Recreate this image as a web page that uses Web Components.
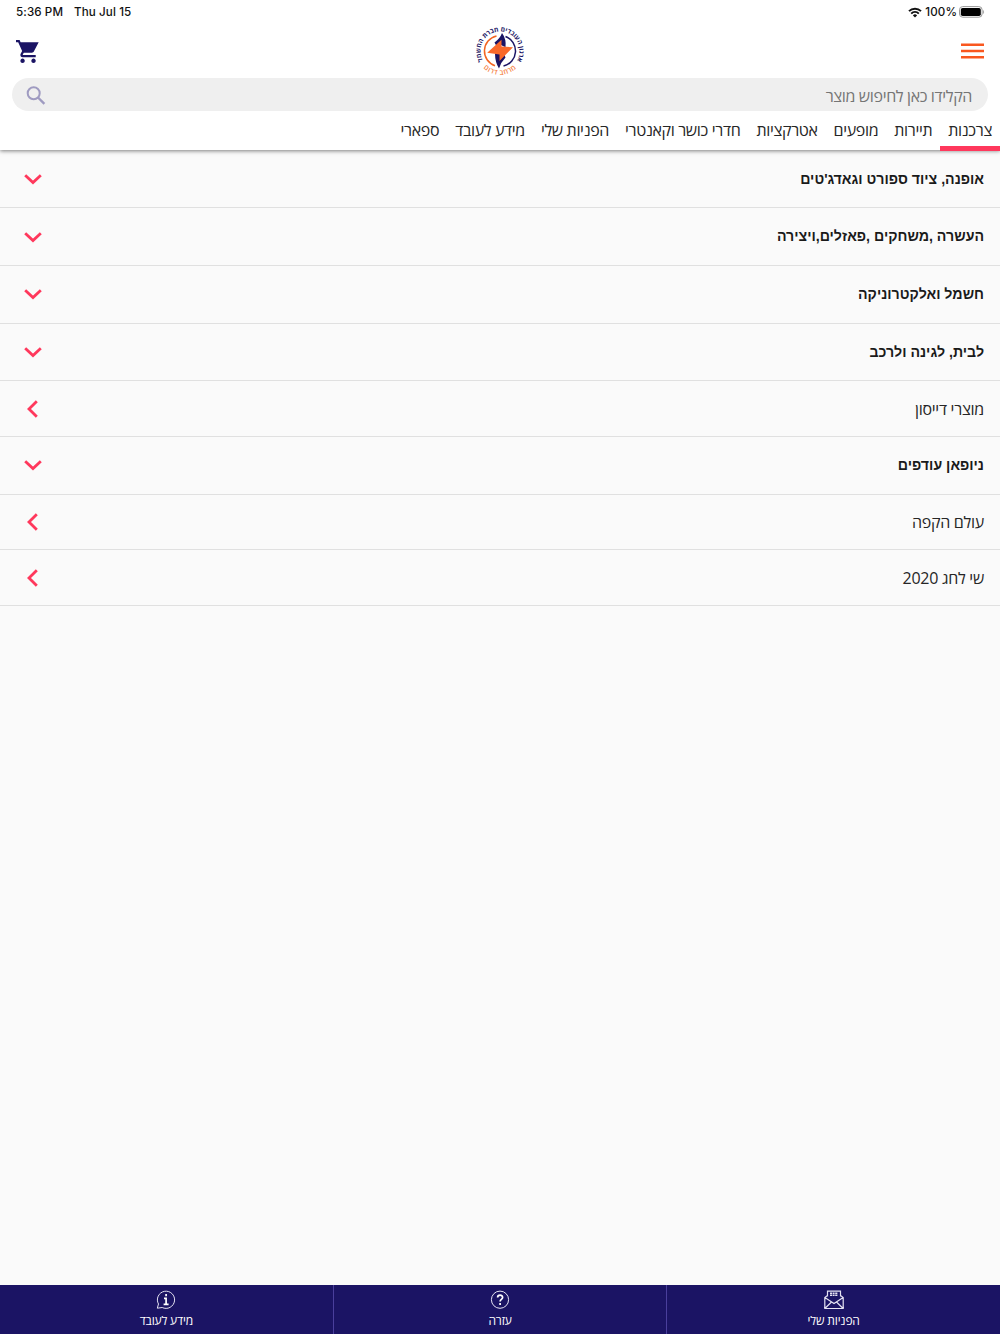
<!DOCTYPE html>
<html lang="he" dir="rtl">
<head>
<meta charset="utf-8">
<meta name="viewport" content="width=device-width">
<title>צרכנות</title>
<style>
html, body{
    margin: 0;
    height: 100%;
}
body{
    background: #fafafa;
    font-family: "Open Sans", "Noto Sans", "DejaVu Sans", sans-serif;
    color: #262626;
    overflow: hidden;
}
</style>
</head>
<body>
<shop-app></shop-app>

<script>
class BaseElement extends HTMLElement{
    constructor(){
        super();
        this.attachShadow({mode:'open'});
        this.shadowRoot.innerHTML = this.render();
    }
}

// Device status bar
class StatusBar extends BaseElement{
    render(){
        return `
        <style>
        :host{
            display: flex;
            direction: ltr;
            justify-content: space-between;
            height: 24px;
            padding: 0 15px 0 16px;
            box-sizing: border-box;
            align-items: center;
            font: 500 11.6px/24px Inter, "Liberation Sans", sans-serif;
            letter-spacing: 0.1px;
            color: #111;
        }
        div{
            display: flex;
            align-items: center;
        }
        .left{ gap: 11px; }
        .wifi{ margin-right: 3px; }
        .battery{ margin-left: 2px; }
        </style>
        <div class="left"><span>5:36 PM</span><span>Thu Jul 15</span></div>
        <div>
            <svg class="wifi" width="14" height="11" viewBox="0 0 14 11" fill="none" stroke="#111" stroke-width="2">
                <path d="M1 4.1a8.6 8.6 0 0 1 12 0M3.2 6.6a5.5 5.5 0 0 1 7.6 0"/>
                <path d="M7 10.6 4.9 8.4a3 3 0 0 1 4.2 0z" fill="#111" stroke="none"/>
            </svg>
            <span>100%</span>
            <svg class="battery" width="26" height="12" viewBox="0 0 26 12">
                <rect x=".5" y=".6" width="22.6" height="10.6" rx="3.2" fill="none" stroke="#999"/>
                <rect x="1.8" y="2" width="20" height="8" rx="1.8" fill="#000"/>
                <path d="M24.2 4v4c1.2-.6 1.2-3.4 0-4z" fill="#999"/>
            </svg>
        </div>
        `;
    }
}

class UnionLogo extends BaseElement{
    render(){
        return `
        <style>
        :host{ display: block; width: 52px; height: 52px; }
        svg{ display: block; direction: rtl; }
        text{ font-family: "Open Sans", "DejaVu Sans", sans-serif; }
        </style>
        <svg width="52" height="52" viewBox="-26 -26 52 52">
            <defs>
                <path id="top" d="M-14.5 13A19.500 19.500 0 1 1 14.5 13"/>
                <path id="bottom" d="M-19.6 13.500A23.8 23.8 0 0 0 19.6 13.500"/>
            </defs>
            <path d="M-3.5 -15.1A15.500 15.500 0 0 0 -5 14.700" fill="none" stroke="#f26522" stroke-width="1.5"/>
            <path d="M5.500 -14.5A15.500 15.500 0 0 1 3.5 15.100" fill="none" stroke="#1b1464" stroke-width="1.5"/>
            <path d="M2 -18Q0 -12.500 -5.500 -8.500L-3 -4 1 -6 5.500 -3.800Q6.500 -12 2 -18zM-5 2.500Q-5 11 -1 17.500 1 11 5.500 6.500L3 .5z" fill="#1b1464"/>
            <path d="M1.500 -11.200V-4.500L13 -3.800 -.5 10V3.400L-12.800 1.800z" fill="#f9682a"/>
            <text font-size="6.5" font-weight="700" fill="#1b1464" text-anchor="middle"><textPath href="#top" startOffset="50%">ארגון העובדים חברת החשמל</textPath></text>
            <text font-size="7" letter-spacing=".5" font-weight="600" fill="#f5813f" text-anchor="middle"><textPath href="#bottom" startOffset="50%">מרחב דרום</textPath></text>
        </svg>
        `;
    }
}

class TopBar extends BaseElement{
    render(){
        return `
        <style>
        :host{
            display: flex;
            direction: ltr;
            justify-content: space-between;
            align-items: center;
            height: 54px;
            padding: 0 16px;
            box-sizing: border-box;
        }
        svg{ display: block; }
        .side{ width: 24px; }
        </style>
        <div class="side">
            <svg width="23" height="23" viewBox="1 2 21 20" preserveAspectRatio="none" fill="#1b1464">
                <path d="M7 18c-1.1 0-1.99.9-1.99 2S5.9 22 7 22s2-.9 2-2-.9-2-2-2zM1 2v2h2l3.600 7.590-1.350 2.450c-.16.28-.25.61-.25.960 0 1.100.9 2 2 2h12v-2H7.420c-.14 0-.25-.11-.25-.25l.03-.12.900-1.630h7.450c.75 0 1.410-.41 1.750-1.030L21.700 4H5.210l-.94-2H1zm16 16c-1.100 0-1.990.9-1.990 2s.89 2 1.990 2 2-.9 2-2-.9-2-2-2z"/>
            </svg>
        </div>
        <union-logo></union-logo>
        <div class="side">
            <svg width="24" height="16" viewBox="0 0 24 16" fill="#f9571f">
                <path d="M1 0.500h23v2.400H1zM1 6.800h23v2.400H1zM1 13.100h23v2.400H1z"/>
            </svg>
        </div>
        `;
    }
}

class SearchBox extends BaseElement{
    render(){
        return `
        <style>
        :host{
            display: flex;
            align-items: center;
            justify-content: space-between;
            height: 33px;
            margin: 0 12px;
            padding: 0 16px 0 14px;
            box-sizing: border-box;
            border-radius: 17px;
            background: #efefef;
            color: #757575;
            font-size: 16px;
            letter-spacing: -0.36px;
            line-height: 32px;
        }
        span{ padding-top: 2px; }
        </style>
        <span><slot></slot></span>
        <svg width="20" height="20" viewBox="0 0 20 20" fill="none" stroke="#9f9bc1" stroke-width="2">
            <circle cx="7.700" cy="8.200" r="6"/>
            <path d="M12 12.500 18.400 18.900" stroke-width="2.400"/>
        </svg>
        `;
    }
}

class TabItem extends BaseElement{
    render(){
        return `
        <style>
        :host{
            display: block;
            padding: 0 8px;
            height: 39.700px;
            box-sizing: border-box;
            font-size: 16px;
            letter-spacing: -0.340px;
            line-height: 38px;
            white-space: nowrap;
            border-bottom: 5px solid transparent;
        }
        :host([active]){ border-color: #ff385c; }
        </style>
        <slot></slot>
        `;
    }
}

class ShopHeader extends BaseElement{
    render(){
        return `
        <style>
        :host{
            display: block;
            position: relative;
            height: 150.200px;
            margin-bottom: 0.600px;
            background: #fff;
            box-shadow: 0 1px 4px rgba(0,0,0,.5);
        }
        nav{ display: flex; }
        </style>
        <status-bar></status-bar>
        <top-bar></top-bar>
        <search-box>הקלידו כאן לחיפוש מוצר</search-box>
        <nav><slot></slot></nav>
        `;
    }
}

class CategoryRow extends BaseElement{
    render(){
        return `
        <style>
        :host{
            display: flex;
            align-items: center;
            justify-content: space-between;
            height: 55.700px;
            box-sizing: border-box;
            padding: 0.400px 16px 0 24px;
            border-bottom: 1px solid #e0e0e0;
            font-size: 16px;
            letter-spacing: -0.270px;
        }
        :host([expandable]){
            height: 57.650px;
            padding-top: 0;
            font-family: "Liberation Sans", Arial, sans-serif;
            font-size: 14.200px;
            font-weight: 700;
            letter-spacing: 0;
            color: #1a1a1a;
        }
        :host([expandable]) span{ margin-top: -0.600px; }
        svg{
            fill: none;
            stroke: #ff385c;
            stroke-width: 2.800;
        }
        .down{ display: none; }
        :host([expandable]) .down{ display: block; }
        :host([expandable]) .next{ display: none; }
        </style>
        <span><slot></slot></span>
        <svg class="down" width="18" height="18" viewBox="0 0 18 18"><path d="M1.200 5.200 9 12.600 16.800 5.200"/></svg>
        <svg class="next" width="18" height="18" viewBox="0 0 18 18"><path d="M12.800 1.200 5 9 12.800 16.800"/></svg>
        `;
    }
}

class FooterItem extends BaseElement{
    render(){
        return `
        <style>
        :host{
            display: flex;
            flex-direction: column;
            align-items: center;
            flex: 1 1 0;
            padding-top: 5px;
            box-sizing: border-box;
            border-left: 1px solid #4a3f9c;
            color: #fff;
            font-size: 12px;
            letter-spacing: -0.150px;
            line-height: 22px;
        }
        :host(:last-child){ border-left: 0; }
        ::slotted(svg){
            display: block;
            fill: none;
            stroke: #e4e2f2;
        }
        </style>
        <slot name="icon"></slot>
        <span><slot></slot></span>
        `;
    }
}

class ShopApp extends BaseElement{
    render(){
        return `
        <style>
        :host{
            display: flex;
            flex-direction: column;
            height: 100vh;
        }
        main{ flex: 1; }
        footer{
            display: flex;
            height: 49px;
            background: #1b1464;
        }
        </style>
        <shop-header>
            <tab-item active>צרכנות</tab-item>
            <tab-item>תיירות</tab-item>
            <tab-item>מופעים</tab-item>
            <tab-item>אטרקציות</tab-item>
            <tab-item>חדרי כושר וקאנטרי</tab-item>
            <tab-item>הפניות שלי</tab-item>
            <tab-item>מידע לעובד</tab-item>
            <tab-item>ספארי</tab-item>
        </shop-header>
        <main>
            <category-row expandable>אופנה, ציוד ספורט וגאדג'טים</category-row>
            <category-row expandable>העשרה ,משחקים ,פאזלים,ויצירה</category-row>
            <category-row expandable>חשמל ואלקטרוניקה</category-row>
            <category-row expandable>לבית, לגינה ולרכב</category-row>
            <category-row>מוצרי דייסון</category-row>
            <category-row expandable>ניופאן עודפים</category-row>
            <category-row>עולם הקפה</category-row>
            <category-row>שי לחג 2020</category-row>
        </main>
        <footer>
            <footer-item>
                <svg slot="icon" width="20" height="20" viewBox="0 0 20 20">
                    <path d="M3.500 6.500V1.200h13v5.300M3.500 5.500.8 7.500v11h18.400v-11l-2.700-2M.8 7.500 10 13.500l9.200-6M.8 18.500 7.500 12M19.200 18.500 12.500 12" stroke-width="1.200"/>
                    <path d="M6 3.300h8M6 5.300h8" stroke-width="1.400" stroke-dasharray="2 .6"/>
                </svg>
                הפניות שלי
            </footer-item>
            <footer-item>
                <svg slot="icon" width="20" height="20" viewBox="0 0 20 20">
                    <circle cx="10" cy="9.700" r="8.600"/>
                    <path d="M7.600 7.600c0-3.200 5-3.100 5-.2 0 2-2.500 1.900-2.500 4.100M10.100 13v1.900" stroke="#fff" stroke-width="1.700"/>
                </svg>
                עזרה
            </footer-item>
            <footer-item>
                <svg slot="icon" width="20" height="20" viewBox="0 0 20 20">
                    <path d="M2.500 14A8.600 8.600 0 1 1 6.200 17.500L1.300 18.200z"/>
                    <path d="M10.100 4v2.200M8 8.300h2.100v6M7.600 14.300h5" stroke="#fff" stroke-width="1.700"/>
                </svg>
                מידע לעובד
            </footer-item>
        </footer>
        `;
    }
}

customElements.define("status-bar", StatusBar);
customElements.define("union-logo", UnionLogo);
customElements.define("top-bar", TopBar);
customElements.define("search-box", SearchBox);
customElements.define("tab-item", TabItem);
customElements.define("shop-header", ShopHeader);
customElements.define("category-row", CategoryRow);
customElements.define("footer-item", FooterItem);
customElements.define("shop-app", ShopApp);
</script>
</body>
</html>
